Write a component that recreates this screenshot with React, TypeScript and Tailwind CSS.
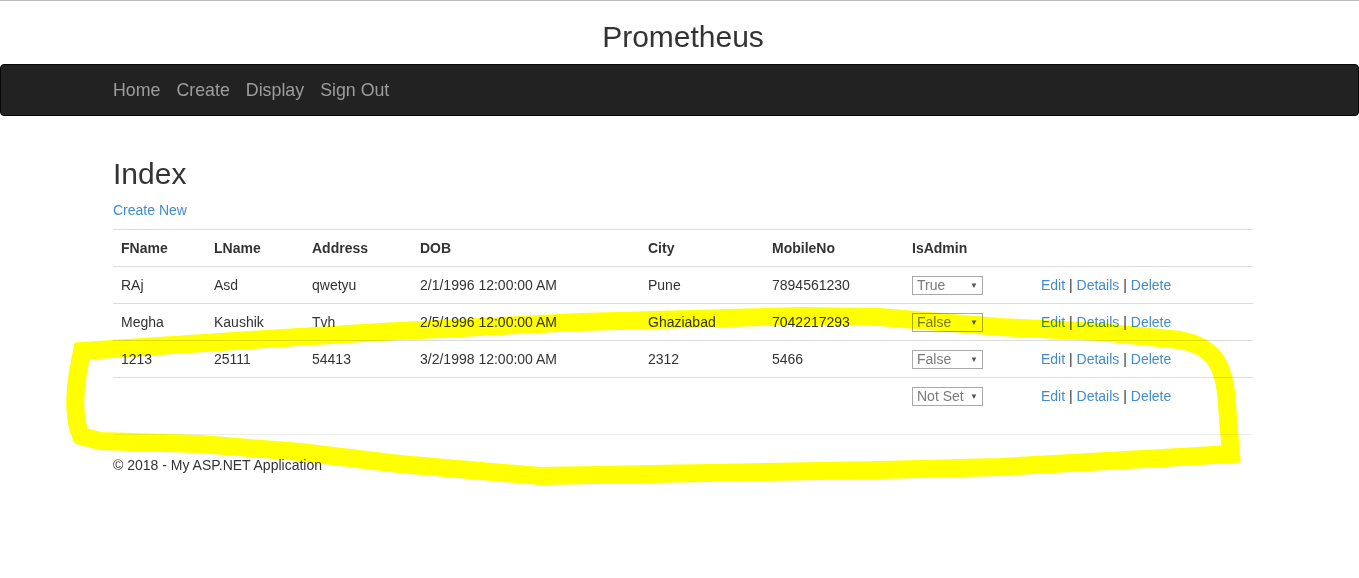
import React from "react";

const cols = [
  { name: "FName", w: "w-[93px]" },
  { name: "LName", w: "w-[98px]" },
  { name: "Address", w: "w-[108px]" },
  { name: "DOB", w: "w-[228px]" },
  { name: "City", w: "w-[124px]" },
  { name: "MobileNo", w: "w-[140px]" },
  { name: "IsAdmin", w: "w-[129px]" },
  { name: "", w: "w-[220px]" },
];

const rows = [
  ["RAj", "Asd", "qwetyu", "2/1/1996 12:00:00 AM", "Pune", "7894561230", "True"],
  ["Megha", "Kaushik", "Tvh", "2/5/1996 12:00:00 AM", "Ghaziabad", "7042217293", "False"],
  ["1213", "25111", "54413", "3/2/1998 12:00:00 AM", "2312", "5466", "False"],
  ["", "", "", "", "", "", "Not Set"],
];

function FakeSelect({ value }: { value: string }) {
  return (
    <div className="flex items-center justify-between w-[71px] h-[19px] mt-px border border-[#a9a9a9] pl-[4px] pr-[4px] text-[#7a7a7a] text-[14px] leading-[17px]">
      <span>{value}</span>
      <span className="text-[8px] leading-[8px] text-[#555]">▼</span>
    </div>
  );
}

export default function App() {
  return (
    <div
      className="relative w-[1359px] h-[578px] bg-white text-[#333] text-[14px] leading-[20px] overflow-hidden"
      style={{ fontFamily: '"Liberation Sans", Arial, Helvetica, sans-serif' }}
    >
      <div className="h-px bg-[#b9b9b9]" />
      <div className="pt-[19px] pb-[11px] pl-[7px] text-center text-[30px] leading-[33px] text-[#333]">
        Prometheus
      </div>

      <nav className="h-[52px] bg-[#222] border border-[#080808] rounded-[4px] flex items-center">
        <div className="ml-[112px] flex gap-[16px] text-[17.8px] text-[#9d9d9d]">
          <a>Home</a>
          <a>Create</a>
          <a>Display</a>
          <a>Sign Out</a>
        </div>
      </nav>

      <div className="ml-[113px] w-[1140px]">
        <h2 className="mt-[41px] text-[30px] leading-[33px] mb-[10px]">Index</h2>
        <p className="mb-[9px]">
          <a className="text-[#428bca]">Create New</a>
        </p>

        <table className="w-[1140px] table-fixed border-collapse">
          <thead>
            <tr className="border-t border-[#ddd]">
              {cols.map((c, i) => (
                <th
                  key={i}
                  className={`${c.w} text-left font-bold px-[8px] py-[8px] leading-[20px] border-b border-[#ddd]`}
                >
                  {c.name}
                </th>
              ))}
            </tr>
          </thead>
          <tbody>
            {rows.map((r, i) => (
              <tr key={i} className={i < rows.length - 1 ? "border-b border-[#ddd]" : ""}>
                {r.slice(0, 6).map((v, j) => (
                  <td key={j} className="px-[8px] py-[8px] leading-[20px] align-top">
                    {v}
                  </td>
                ))}
                <td className="px-[8px] py-[8px] leading-[20px] align-top">
                  <FakeSelect value={r[6]} />
                </td>
                <td className="px-[8px] py-[8px] leading-[20px] align-top">
                  <a className="text-[#428bca]">Edit</a> |{" "}
                  <a className="text-[#428bca]">Details</a> |{" "}
                  <a className="text-[#428bca]">Delete</a>
                </td>
              </tr>
            ))}
          </tbody>
        </table>

        <hr className="mt-[20px] border-t border-[#eee]" />
        <footer className="mt-[20px]">
          <p>© 2018 - My ASP.NET Application</p>
        </footer>
      </div>

      {/* yellow marker scribble drawn over the screenshot */}
      <svg
        className="absolute left-0 top-0 pointer-events-none mix-blend-multiply"
        width="1359"
        height="578"
        viewBox="0 0 1359 578"
      >
        <path
          d="M 82 351 L 113 349 L 250 340 L 380 332 L 580 322 L 800 316 L 880 317 L 1000 327 L 1100 332 L 1180 340 C 1212 346 1222 362 1226 392 L 1229 430 L 1231 454 L 1180 457 L 1000 467 L 880 470 L 540 476 L 400 464 L 300 452 L 200 444 L 100 441 L 81 436 C 74 420 74 395 78 372 L 82 351 Z"
          fill="none"
          stroke="#ffff00"
          strokeWidth="18"
          strokeLinejoin="miter"
        />
      </svg>
    </div>
  );
}
